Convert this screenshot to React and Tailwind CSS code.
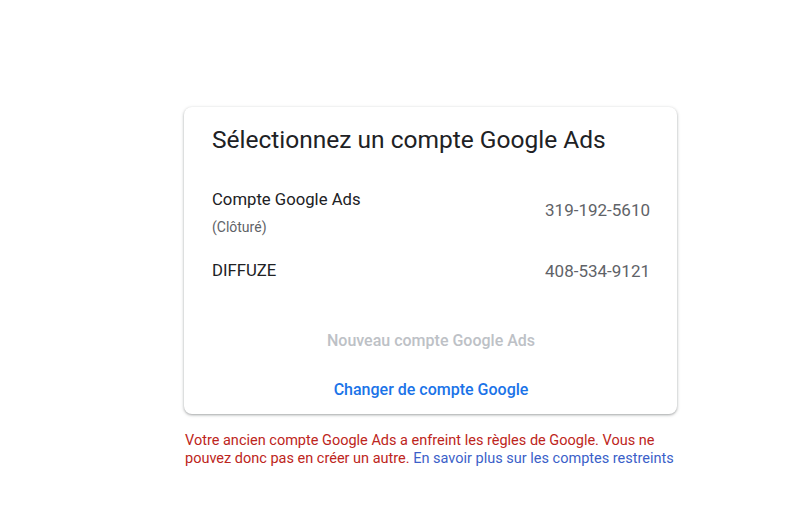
import React from 'react';

function AccountRow({ name, status, id }) {
  return (
    <div className="flex items-center justify-between">
      <div className="flex flex-col">
        <span className="text-[16.7px] leading-[24px] text-[#202124]">{name}</span>
        {status && <span className="mt-[5px] text-[14px] leading-[20px] text-[#5f6368]">{status}</span>}
      </div>
      <span className={`text-[17px] leading-[24px] text-[#5f6368] ${status ? 'pb-[5px]' : ''}`}>{id}</span>
    </div>
  );
}

export default function App() {
  return (
    <div className="min-h-screen bg-white font-['Roboto',sans-serif]">
      <div className="pl-[184px] pt-[107px]">
        <div className="w-[493px]">
          {/* Account picker card */}
          <div className="rounded-lg bg-white pl-[28px] pr-[27px] pt-[17px] pb-[12px] shadow-[0_1px_2px_rgba(60,64,67,0.3),0_1px_3px_1px_rgba(60,64,67,0.15)]">
            <h1 className="text-[24.5px] leading-[32px] text-[#202124]">Sélectionnez un compte Google Ads</h1>
            <div className="mt-[32px] flex flex-col gap-[22px]">
              <AccountRow name="Compte Google Ads" status="(Clôturé)" id="319-192-5610" />
              <AccountRow name="DIFFUZE" id="408-534-9121" />
            </div>
            <div className="mt-[46px] flex flex-col items-center gap-[25px]">
              <span className="text-[16px] font-medium leading-[24px] text-[#bdc1c6]">Nouveau compte Google Ads</span>
              <button className="text-[16px] font-medium leading-[24px] text-[#1a73e8]">Changer de compte Google</button>
            </div>
          </div>

          {/* Restriction notice */}
          <p className="mt-[18px] pl-px text-[14.5px] leading-[18px] text-[#bd2520]">
            Votre ancien compte Google Ads a enfreint les règles de Google. Vous ne pouvez donc pas en créer un autre.{' '}
            <a className="text-[#3b5fc9]">En savoir plus sur les comptes restreints</a>
          </p>
        </div>
      </div>
    </div>
  );
}
